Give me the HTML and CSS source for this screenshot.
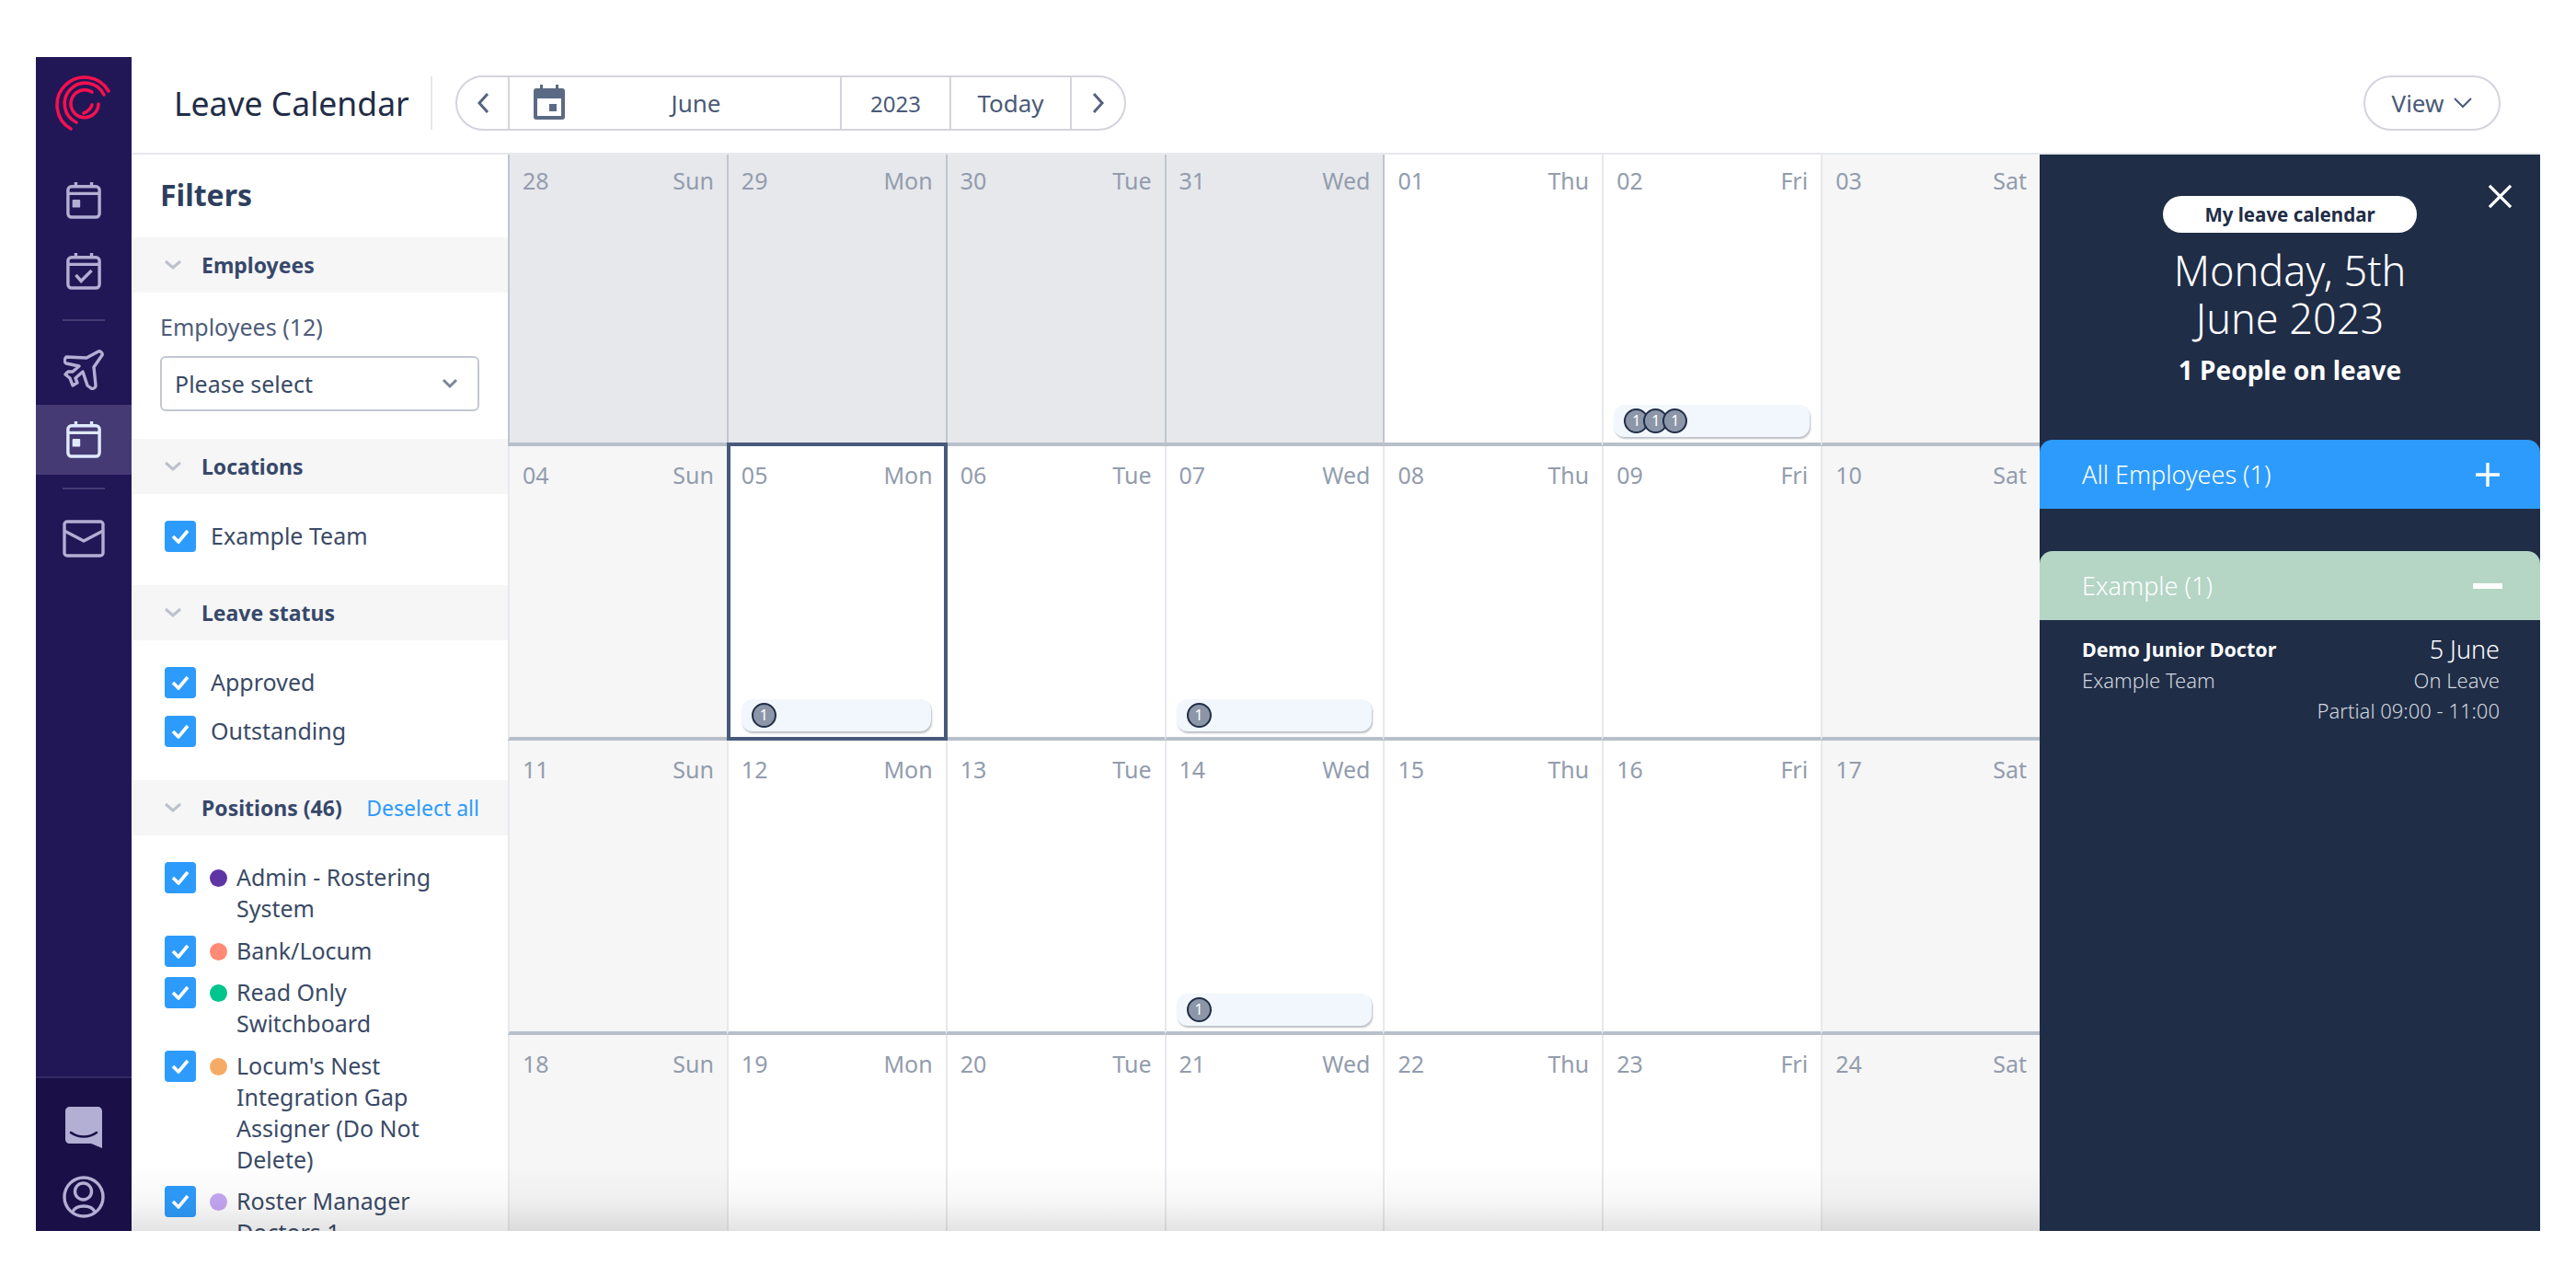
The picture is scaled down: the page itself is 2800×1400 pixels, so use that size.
FILE: index.html
```html
<!DOCTYPE html>
<html>
<head>
<title>Leave Calendar</title>
<link rel="stylesheet" href="styles.css">
</head>
<body>
  <div id="app">
    <nav id="rail">
      <svg class="logo" viewBox="10 12 60 60" fill="none" stroke="#f5104f" stroke-width="3.6" stroke-linecap="round">
        <path d="M68 29A30 30 0 1 0 27 70"/>
        <path d="M63 33A22.5 22.5 0 1 0 33 63"/>
        <path d="M50 30A15 15 0 1 0 57 43"/>
        <path d="M50 44Q48 50 41 53"/>
      </svg>
      <div class="rail_item">
        <svg class="rail_icon" viewBox="0 0 40 42" fill="none" stroke="currentColor" stroke-width="3.6"><rect x="2" y="5" width="36" height="35" rx="4"/><path d="M2 13H38M11 0V5M29 0V5"/><rect x="7" y="20" width="9" height="9" rx="1" fill="currentColor" stroke="none"/></svg>
      </div>
      <div class="rail_item">
        <svg class="rail_icon" viewBox="0 0 40 42" fill="none" stroke="currentColor" stroke-width="3.6"><rect x="2" y="5" width="36" height="35" rx="4"/><path d="M2 13H38M11 0V5M29 0V5"/><path d="M11 25L17 32L29 20"/></svg>
      </div>
      <div class="rail_line"></div>
      <div class="rail_item">
        <svg class="rail_icon wide" viewBox="0 0 44 44" fill="none" stroke="currentColor" stroke-width="3.4" stroke-linejoin="round"><path d="M25 9L38 2C40 1 43 4 42 6L33 19L35 39C35 42 31 43 30 42L26 39L21 24L13 31L15 36L10 39L7 31L2 27L5 24H10L17 18L3 15C1 14 1 11 1 11L3 8Z"/></svg>
      </div>
      <div class="rail_item active">
        <svg class="rail_icon" viewBox="0 0 40 42" fill="none" stroke="currentColor" stroke-width="3.6"><rect x="2" y="5" width="36" height="35" rx="4"/><path d="M2 13H38M11 0V5M29 0V5"/><rect x="7" y="20" width="9" height="9" rx="1" fill="currentColor" stroke="none"/></svg>
      </div>
      <div class="rail_line"></div>
      <div class="rail_item">
        <svg class="rail_icon mail_icon" viewBox="0 0 46 41" fill="none" stroke="currentColor" stroke-width="3.4" stroke-linejoin="round"><rect x="2" y="2" width="42" height="37" rx="3"/><path d="M2 12L23 23L44 12"/></svg>
      </div>
      <div class="rail_foot">
        <svg class="chat_icon" viewBox="0 0 40 45"><path d="M5 0H35C38 0 40 2 40 5V45L28 40H5C2 40 0 38 0 35V5C0 2 2 0 5 0Z" fill="currentColor"/><path d="M6 28C14 34 26 34 34 28" fill="none" stroke="#1a0f47" stroke-width="2.6" stroke-linecap="round"/></svg>
        <svg class="user_icon" viewBox="0 0 46 46" fill="none" stroke="currentColor" stroke-width="3.4"><circle cx="23" cy="23" r="21"/><circle cx="22.5" cy="17" r="9"/><path d="M11 39C15 31 31 31 35 39"/></svg>
      </div>
    </nav>
    <div id="main">
      <header id="top">
        <h1>Leave Calendar</h1>
        <div class="top_div"></div>
        <div class="nav_pill">
          <div class="seg seg_arrow"><svg class="chev" viewBox="0 0 14 24"><path d="M12 2L3 12L12 22"/></svg></div>
          <div class="seg seg_month">
            <svg class="cal_icon" viewBox="0 0 34 38"><path d="M3 4H7V0H10V4H24V0H27V4H31C33 4 34 5 34 7V35C34 37 33 38 31 38H3C1 38 0 37 0 35V7C0 5 1 4 3 4ZM4 15V34H30V15Z" fill="#5b6a84" fill-rule="evenodd"/><rect x="17" y="21" width="8" height="8" fill="#5b6a84"/></svg>
            <span>June</span>
          </div>
          <div class="seg seg_year">2023</div>
          <div class="seg seg_today">Today</div>
          <div class="seg seg_arrow last"><svg class="chev" viewBox="0 0 14 24"><path d="M2 2L11 12L2 22"/></svg></div>
        </div>
        <div class="view_btn">View <svg viewBox="0 0 20 12"><path d="M1 1L10 10L19 1"/></svg></div>
      </header>
      <div id="body">
        <aside id="filters">
          <h2>Filters</h2>
          <div class="band"><svg class="band_chev" viewBox="0 0 20 12"><path d="M2 2L10 9L18 2"/></svg><b>Employees</b></div>
          <div class="sect emp">
            <div class="emp_label">Employees (12)</div>
            <div class="picker">Please select<svg viewBox="0 0 18 12"><path d="M2 2L9 9L16 2"/></svg></div>
          </div>
          <div class="band"><svg class="band_chev" viewBox="0 0 20 12"><path d="M2 2L10 9L18 2"/></svg><b>Locations</b></div>
          <div class="sect list">
            <div class="check"><i class="box"><svg viewBox="0 0 20 16"><path d="M2 8L8 14L18 2"/></svg></i><span>Example Team</span></div>
          </div>
          <div class="band"><svg class="band_chev" viewBox="0 0 20 12"><path d="M2 2L10 9L18 2"/></svg><b>Leave status</b></div>
          <div class="sect list tight">
            <div class="check"><i class="box"><svg viewBox="0 0 20 16"><path d="M2 8L8 14L18 2"/></svg></i><span>Approved</span></div>
            <div class="check"><i class="box"><svg viewBox="0 0 20 16"><path d="M2 8L8 14L18 2"/></svg></i><span>Outstanding</span></div>
          </div>
          <div class="band"><svg class="band_chev" viewBox="0 0 20 12"><path d="M2 2L10 9L18 2"/></svg><b>Positions (46)</b><a>Deselect all</a></div>
          <div class="sect list pos">
            <div class="check"><i class="box"><svg viewBox="0 0 20 16"><path d="M2 8L8 14L18 2"/></svg></i><i class="dot c1"></i><span>Admin - Rostering System</span></div>
            <div class="check"><i class="box"><svg viewBox="0 0 20 16"><path d="M2 8L8 14L18 2"/></svg></i><i class="dot c2"></i><span>Bank/Locum</span></div>
            <div class="check"><i class="box"><svg viewBox="0 0 20 16"><path d="M2 8L8 14L18 2"/></svg></i><i class="dot c3"></i><span>Read Only Switchboard</span></div>
            <div class="check"><i class="box"><svg viewBox="0 0 20 16"><path d="M2 8L8 14L18 2"/></svg></i><i class="dot c4"></i><span>Locum's Nest Integration Gap Assigner (Do Not Delete)</span></div>
            <div class="check"><i class="box"><svg viewBox="0 0 20 16"><path d="M2 8L8 14L18 2"/></svg></i><i class="dot c5"></i><span>Roster Manager Doctors 1</span></div>
          </div>
        </aside>
        <section id="cal">
          <div class="cell past"><div class="dh"><span>28</span><span>Sun</span></div></div>
          <div class="cell past"><div class="dh"><span>29</span><span>Mon</span></div></div>
          <div class="cell past"><div class="dh"><span>30</span><span>Tue</span></div></div>
          <div class="cell past"><div class="dh"><span>31</span><span>Wed</span></div></div>
          <div class="cell"><div class="dh"><span>01</span><span>Thu</span></div></div>
          <div class="cell"><div class="dh"><span>02</span><span>Fri</span></div>
            <div class="bar"><i>1</i><i>1</i><i>1</i></div></div>
          <div class="cell wkend"><div class="dh"><span>03</span><span>Sat</span></div></div>

          <div class="cell wkend"><div class="dh"><span>04</span><span>Sun</span></div></div>
          <div class="cell sel"><div class="dh"><span>05</span><span>Mon</span></div>
            <div class="bar"><i>1</i></div></div>
          <div class="cell"><div class="dh"><span>06</span><span>Tue</span></div></div>
          <div class="cell"><div class="dh"><span>07</span><span>Wed</span></div>
            <div class="bar"><i>1</i></div></div>
          <div class="cell"><div class="dh"><span>08</span><span>Thu</span></div></div>
          <div class="cell"><div class="dh"><span>09</span><span>Fri</span></div></div>
          <div class="cell wkend"><div class="dh"><span>10</span><span>Sat</span></div></div>

          <div class="cell wkend"><div class="dh"><span>11</span><span>Sun</span></div></div>
          <div class="cell"><div class="dh"><span>12</span><span>Mon</span></div></div>
          <div class="cell"><div class="dh"><span>13</span><span>Tue</span></div></div>
          <div class="cell"><div class="dh"><span>14</span><span>Wed</span></div>
            <div class="bar"><i>1</i></div></div>
          <div class="cell"><div class="dh"><span>15</span><span>Thu</span></div></div>
          <div class="cell"><div class="dh"><span>16</span><span>Fri</span></div></div>
          <div class="cell wkend"><div class="dh"><span>17</span><span>Sat</span></div></div>

          <div class="cell wkend"><div class="dh"><span>18</span><span>Sun</span></div></div>
          <div class="cell"><div class="dh"><span>19</span><span>Mon</span></div></div>
          <div class="cell"><div class="dh"><span>20</span><span>Tue</span></div></div>
          <div class="cell"><div class="dh"><span>21</span><span>Wed</span></div></div>
          <div class="cell"><div class="dh"><span>22</span><span>Thu</span></div></div>
          <div class="cell"><div class="dh"><span>23</span><span>Fri</span></div></div>
          <div class="cell wkend"><div class="dh"><span>24</span><span>Sat</span></div></div>
        </section>
        <div id="fade"></div>
        <aside id="panel">
          <div class="panel_head">
            <svg class="close" viewBox="0 0 28 28"><path d="M2 2L26 26M26 2L2 26"/></svg>
            <div class="my_pill">My leave calendar</div>
            <div class="panel_date">Monday, 5th<br>June 2023</div>
            <div class="panel_count">1 People on leave</div>
          </div>
          <div class="acc acc_all">All Employees (1)<svg viewBox="0 0 26 26"><path d="M13 0V26M0 13H26"/></svg></div>
          <div class="acc acc_ex">Example (1)<svg class="minus" viewBox="0 0 32 6"><path d="M0 3H32"/></svg></div>
          <div class="person">
            <div class="person_row"><b>Demo Junior Doctor</b><span class="when">5 June</span></div>
            <div class="person_row sub"><span>Example Team</span><span>On Leave</span></div>
            <div class="person_row sub end"><span>Partial 09:00 - 11:00</span></div>
          </div>
        </aside>
      </div>
    </div>
  </div>
</body>
</html>
```

FILE: styles.css
```css
html, body {
  margin: 0;
  height: 100%;
  background-color: #fff;
}
body {
  font-family: "Noto Sans", sans-serif;
  color: #1f2d47;
  overflow: hidden;
}
#app {
  display: flex;
  width: 2722px;
  height: 1276px;
  margin: 62px 0 0 39px;
}
#rail {
  width: 104px;
  flex-shrink: 0;
  background-color: #211756;
  color: #b3aed3;
  display: flex;
  flex-direction: column;
  align-items: center;
}
.logo {
  width: 60px;
  height: 60px;
  margin: 20px 2px 38px 0;
  flex-shrink: 0;
}
.rail_item {
  width: 100%;
  height: 76px;
  display: flex;
  align-items: center;
  justify-content: center;
  flex-shrink: 0;
}
.rail_item + .rail_item { margin-top: 1px; }
.rail_item.active { margin-top: 0; }
.rail_icon {
  width: 38px;
  height: 40px;
}
.rail_icon.wide {
  width: 44px;
  height: 44px;
}
.rail_icon.mail_icon {
  width: 46px;
  height: 41px;
}
.active {
  background-color: #453a73;
  color: #dfe9ff;
}
.rail_line {
  width: 46px;
  height: 2px;
  background-color: #453a73;
  margin: 14px 0 15px;
  flex-shrink: 0;
}
.rail_foot {
  margin-top: auto;
  width: 100%;
  height: 168px;
  background-color: #1a0f47;
  border-top: 2px solid #332a63;
  box-sizing: border-box;
  display: flex;
  flex-direction: column;
  align-items: center;
  padding-top: 31px;
  gap: 30px;
}
.chat_icon {
  width: 40px;
  height: 45px;
  flex-shrink: 0;
}
.user_icon {
  width: 46px;
  height: 46px;
  flex-shrink: 0;
}
#main {
  flex-grow: 1;
  display: flex;
  flex-direction: column;
  min-width: 0;
}
#top {
  height: 106px;
  box-sizing: border-box;
  flex-shrink: 0;
  display: flex;
  align-items: center;
  border-bottom: 2px solid #e8e9ed;
  padding: 0 43px 4px 0;
}
h1 {
  font-size: 35.5px;
  font-weight: 400;
  margin: 0 0 0 46px;
  width: 279px;
  white-space: nowrap;
}
.top_div {
  width: 2px;
  height: 58px;
  background-color: #e6e7eb;
}
.nav_pill {
  display: flex;
  height: 60px;
  box-sizing: border-box;
  width: 729px;
  margin-left: 25px;
  border: 2px solid #d3d4dd;
  border-radius: 30px;
  color: #4a5a78;
  font-size: 26px;
}
.seg {
  display: flex;
  align-items: center;
  justify-content: center;
  border-right: 2px solid #d3d4dd;
  box-sizing: border-box;
}
.seg_arrow { width: 57px; }
.seg_arrow.last { border-right: none; flex-grow: 1; }
.seg_month {
  width: 361px;
  position: relative;
  padding-left: 46px;
}
.cal_icon {
  position: absolute;
  left: 26px;
  top: 8px;
  width: 34px;
  height: 38px;
}
.seg_year { width: 119px; font-size: 24px; }
.seg_today { width: 131px; }
.chev {
  width: 14px;
  height: 24px;
  fill: none;
  stroke: #55647f;
  stroke-width: 3;
}
.view_btn {
  margin-left: auto;
  width: 149px;
  height: 60px;
  box-sizing: border-box;
  border: 2px solid #d3d4dd;
  border-radius: 30px;
  display: flex;
  align-items: center;
  justify-content: center;
  gap: 11px;
  color: #4a5a78;
  font-size: 26px;
}
.view_btn svg {
  width: 20px;
  height: 12px;
  fill: none;
  stroke: #4a5a78;
  stroke-width: 2;
}
#body {
  flex-grow: 1;
  display: flex;
  position: relative;
  min-height: 0;
}
#filters {
  width: 409px;
  flex-shrink: 0;
  overflow: hidden;
}
h2 {
  font-size: 32px;
  font-weight: 700;
  color: #2e3f5f;
  margin: 0;
  padding: 0 0 0 31px;
  height: 90px;
  line-height: 88px;
}
.band {
  height: 60px;
  background-color: #f6f6f7;
  display: flex;
  align-items: center;
  font-size: 23px;
  color: #37486a;
  padding: 0 31px 0 35px;
}
.band b { font-weight: 700; }
.band_chev {
  width: 20px;
  height: 12px;
  margin-right: 21px;
  fill: none;
  stroke: #bcc1cc;
  stroke-width: 3;
}
.band a {
  margin-left: auto;
  color: #2d9bfb;
}
.sect { padding-left: 31px; }
.emp { height: 159px; }
.emp_label {
  font-size: 25px;
  color: #4e5d78;
  height: 34px;
  line-height: 34px;
  padding-top: 20px;
}
.picker {
  margin-top: 15px;
  width: 347px;
  height: 60px;
  box-sizing: border-box;
  border: 2px solid #c3c7d2;
  border-radius: 6px;
  display: flex;
  align-items: center;
  justify-content: space-between;
  padding: 0 21px 0 14px;
  font-size: 25px;
  color: #3a4a66;
}
.picker svg {
  width: 18px;
  height: 12px;
  fill: none;
  stroke: #7d8697;
  stroke-width: 3;
}
.list {
  padding: 29px 0 0 36px;
  height: 70px;
}
.list.tight {
  height: 123px;
  padding-top: 29px;
  display: flex;
  flex-direction: column;
  gap: 19px;
}
.list.pos {
  height: auto;
  padding-top: 29px;
  display: flex;
  flex-direction: column;
  gap: 11.5px;
}
.check {
  display: flex;
  align-items: flex-start;
  font-size: 25px;
  line-height: 34px;
  color: #3a4a66;
}
.check span { margin: -1px 0 1px; }
.box {
  width: 34px;
  height: 34px;
  flex-shrink: 0;
  background-color: #2d9bfb;
  border-radius: 4px;
  display: flex;
  align-items: center;
  justify-content: center;
  margin-right: 16px;
}
.box svg {
  width: 20px;
  height: 16px;
  fill: none;
  stroke: #fff;
  stroke-width: 3.6;
}
.dot {
  width: 19px;
  height: 19px;
  flex-shrink: 0;
  border-radius: 50%;
  margin: 8px 10px 0 -1px;
}
.c1 { background-color: #5e35a5; }
.c2 { background-color: #ff8a75; }
.c3 { background-color: #00c58d; }
.c4 { background-color: #f5ab65; }
.c5 { background-color: #c5a6f3; }
.pos .check span { width: 240px; }
#cal {
  width: 1665px;
  flex-shrink: 0;
  display: grid;
  grid-template-columns: repeat(7, 1fr);
  grid-template-rows: 317px 320px 320px 1fr;
  overflow: hidden;
}
.cell {
  border-left: 2px solid #e8e9ed;
  border-bottom: 4px solid #b7bfca;
  display: flex;
  flex-direction: column;
  padding: 11px 0 6px;
  box-sizing: border-box;
  min-width: 0;
  position: relative;
}
.cell:nth-child(n+8) { padding-top: 14px; }
.cell:nth-child(n+22) { border-bottom: none; }
.past {
  background-color: #e6e8ec;
  border-left-color: #c0c6d0;
}
.past + .cell { border-left-color: #c0c6d0; }
.wkend { background-color: #f6f6f6; }
.sel::after {
  content: "";
  position: absolute;
  top: -4px;
  left: -2px;
  right: -2px;
  bottom: -4px;
  border: 4px solid #475a7a;
  z-index: 1;
}
.dh {
  display: flex;
  justify-content: space-between;
  padding: 0 14px 0 14px;
  color: #939cad;
  font-size: 25px;
  line-height: 34px;
}
.bar {
  margin: auto 12px 0 11px;
  height: 35px;
  background-color: #f2f7fd;
  border-radius: 12px;
  box-shadow: 1px 2px 2px rgba(60, 70, 90, .35);
  display: flex;
  align-items: center;
  padding-left: 11px;
  flex-shrink: 0;
}
.sel .bar { margin: auto 16px 0 14px; }
.bar i {
  width: 27px;
  height: 27px;
  box-sizing: border-box;
  flex-shrink: 0;
  border: 2px solid #1f2d47;
  border-radius: 50%;
  background-color: #8c96a8;
  color: #fff;
  font-style: normal;
  font-size: 16px;
  line-height: 23px;
  text-align: center;
  margin-right: -6px;
}
#fade {
  position: absolute;
  left: 0;
  width: 2074px;
  bottom: 0;
  height: 72px;
  background: linear-gradient(rgba(0, 0, 0, 0), rgba(0, 0, 0, .03) 55%, rgba(0, 0, 0, .11));
  pointer-events: none;
}
#panel {
  flex-grow: 1;
  background-color: #1f2d47;
  color: #fff;
}
.panel_head {
  height: 310px;
  position: relative;
  text-align: center;
  padding-top: 45px;
  box-sizing: border-box;
}
.close {
  position: absolute;
  top: 32px;
  right: 30px;
  width: 27px;
  height: 27px;
  fill: none;
  stroke: #fff;
  stroke-width: 3.4;
}
.my_pill {
  width: 276px;
  height: 40px;
  margin: 0 auto;
  background-color: #fff;
  border-radius: 20px;
  color: #1f2d47;
  font-size: 20.5px;
  font-weight: 700;
  line-height: 40px;
}
.panel_date {
  font-size: 45px;
  line-height: 52px;
  font-weight: 300;
  margin-top: 15px;
}
.panel_count {
  font-size: 28px;
  font-weight: 700;
  margin-top: 11px;
}
.acc {
  height: 75px;
  border-radius: 14px 14px 0 0;
  display: flex;
  align-items: center;
  justify-content: space-between;
  padding: 0 44px 0 46px;
  font-size: 27px;
  font-weight: 300;
  box-sizing: border-box;
}
.acc svg {
  width: 26px;
  height: 26px;
  fill: none;
  stroke: #fff;
  stroke-width: 3.4;
}
.acc svg.minus {
  width: 32px;
  height: 6px;
  stroke-width: 6;
  margin-right: -3px;
}
.acc_all { background-color: #2d9bfb; }
.acc_ex {
  background-color: #b5d5c5;
  margin-top: 46px;
}
.person {
  padding: 15px 44px 0 46px;
}
.person_row {
  display: flex;
  justify-content: space-between;
  height: 33.5px;
  line-height: 33.5px;
  font-size: 21.5px;
}
.person_row b { font-weight: 700; }
.when { font-size: 27px; font-weight: 300; }
.sub {
  font-size: 22px;
  font-weight: 300;
  color: #d2d6de;
}
.end { justify-content: flex-end; }
```
